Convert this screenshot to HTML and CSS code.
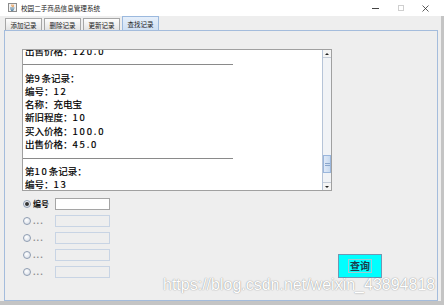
FILE: index.html
```html
<!DOCTYPE html>
<html lang="zh">
<head>
    <meta charset="UTF-8">
    <title>校园二手商品信息管理系统</title>
    <link rel="stylesheet" href="styles.css">
</head>
<body>
    <div class="titlebar">
        <svg class="app-icon" width="9" height="9" viewBox="0 0 9 9">
            <rect x="0.5" y="0.5" width="8" height="8" fill="#f2f2f2" stroke="#8c8c8c"/>
            <path d="M4 1.5 C3 2.5 5 3 4 4.2 M5.4 1.8 C4.8 2.6 6 3 5.3 3.8" fill="none" stroke="#e76f00" stroke-width="0.8"/>
            <path d="M2 5 H6.5 M2.4 6.3 H6 M3 7.5 H5.4" stroke="#5382a1" stroke-width="0.9"/>
        </svg>
        <span class="title">校园二手商品信息管理系统</span>
        <div class="controls">
            <span class="ctl ctl-min"></span>
            <span class="ctl ctl-max"></span>
            <span class="ctl ctl-close">
                <svg width="7" height="7" viewBox="0 0 7 7"><path d="M0.5 0.5 L6.5 6.5 M6.5 0.5 L0.5 6.5" stroke="#333" stroke-width="0.8"/></svg>
            </span>
        </div>
    </div>

    <div class="frame">
        <div class="tabs">
            <div class="tab">添加记录</div>
            <div class="tab">删除记录</div>
            <div class="tab">更新记录</div>
            <div class="tab active">查找记录</div>
        </div>

        <div class="panel">
            <div class="record-box">
                <div class="record-text">
                    <div class="record-lines">
                        <div class="line">出售价格：<span class="num">120.0</span></div>
                        <div class="sep"></div>
                        <div class="line">第<span class="num">9</span>条记录：</div>
                        <div class="line">编号：<span class="num">12</span></div>
                        <div class="line">名称：充电宝</div>
                        <div class="line">新旧程度：<span class="num">10</span></div>
                        <div class="line">买入价格：<span class="num">100.0</span></div>
                        <div class="line">出售价格：<span class="num">45.0</span></div>
                        <div class="sep"></div>
                        <div class="line">第<span class="num">10</span>条记录：</div>
                        <div class="line">编号：<span class="num">13</span></div>
                        <div class="line">名称：台灯</div>
                    </div>
                </div>
                <div class="scrollbar">
                    <div class="sb-btn sb-up"></div>
                    <div class="sb-thumb"></div>
                    <div class="sb-space"></div>
                    <div class="sb-btn sb-down"></div>
                </div>
            </div>

            <div class="search">
                <div class="options">
                    <div class="option">
                        <span class="radio checked"></span>
                        <span class="label">编号</span>
                        <span class="field on"></span>
                    </div>
                    <div class="option">
                        <span class="radio"></span>
                        <span class="label muted">...</span>
                        <span class="field"></span>
                    </div>
                    <div class="option">
                        <span class="radio"></span>
                        <span class="label muted">...</span>
                        <span class="field"></span>
                    </div>
                    <div class="option">
                        <span class="radio"></span>
                        <span class="label muted">...</span>
                        <span class="field"></span>
                    </div>
                    <div class="option">
                        <span class="radio"></span>
                        <span class="label muted">...</span>
                        <span class="field"></span>
                    </div>
                </div>
                <button class="query"><span>查询</span></button>
            </div>
        </div>
    </div>

    <div class="watermark">https://blog.csdn.net/weixin_43894818</div>
</body>
</html>
```

FILE: styles.css
```css
body {
    margin: 0;
    width: 444px;
    height: 305px;
    overflow: hidden;
    position: relative;
    background-color: #c4c4c4;
    font-family: "Noto Sans CJK SC", sans-serif;
}

.titlebar {
    height: 16px;
    background-color: #fff;
    display: flex;
    align-items: center;
    padding-left: 8px;
}

.app-icon {
    margin-right: 4px;
    margin-top: -1px;
}

.title {
    flex: 1;
    font-size: 6.6px;
    color: #222;
}

.controls {
    display: flex;
    margin-right: 6px;
}

.ctl {
    width: 25px;
    height: 16px;
    display: flex;
    align-items: center;
    justify-content: center;
}

.ctl-min::before {
    content: "";
    width: 7px;
    border-top: 1px solid #444;
}

.ctl-max::before {
    content: "";
    width: 6px;
    height: 6px;
    border: 1px solid #cfcfcf;
    box-sizing: border-box;
}

.frame {
    width: 441px;
    height: 285px;
    background-color: #eeeeee;
}

.tabs {
    height: 14px;
    display: flex;
    align-items: flex-end;
    gap: 2px;
    padding-left: 5px;
}

.tab {
    width: 37px;
    height: 12px;
    box-sizing: border-box;
    border: 1px solid #a6a6a6;
    border-bottom: none;
    background: linear-gradient(#fdfdfd, #e3e3e3);
    font-size: 6.5px;
    color: #222;
    display: flex;
    align-items: center;
    justify-content: center;
}

.tab.active {
    height: 14px;
    border-color: #9bb9de;
    background: linear-gradient(#e6effa, #cfe0f4);
}

.panel {
    margin-left: 4px;
    width: 434px;
    height: 271px;
    box-sizing: border-box;
    border: 1px solid #a4bcdc;
    padding: 18px 0 0 17px;
}

.record-box {
    width: 310px;
    height: 142px;
    box-sizing: border-box;
    border: 1px solid #a0a0a0;
    background-color: #fff;
    display: flex;
}

.record-text {
    flex: 1;
    overflow: hidden;
    padding-left: 2px;
}

.record-lines {
    margin-top: -5px;
}

.line {
    height: 13.3px;
    line-height: 13.3px;
    font-size: 9.5px;
    color: #000;
    white-space: nowrap;
    -webkit-text-stroke: 0.2px #000;
}

.num {
    letter-spacing: 1.8px;
}

.sep {
    height: 13.3px;
    margin-left: -2px;
    display: flex;
    align-items: center;
}

.sep::before {
    content: "";
    width: 210px;
    border-top: 1px solid #8a8a8a;
}

.scrollbar {
    width: 9px;
    box-sizing: border-box;
    border-left: 1px solid #b6c4d8;
    background-color: #f1f3f6;
    display: flex;
    flex-direction: column;
}

.sb-btn {
    height: 8px;
    display: flex;
    align-items: center;
    justify-content: center;
    background-color: #f4f4f4;
}

.sb-up {
    border-bottom: 1px solid #c4ccd8;
    box-sizing: border-box;
}

.sb-down {
    border-top: 1px solid #c4ccd8;
    box-sizing: border-box;
}

.sb-up::before {
    content: "";
    border-left: 2px solid transparent;
    border-right: 2px solid transparent;
    border-bottom: 2px solid #222;
}

.sb-down::before {
    content: "";
    border-left: 2px solid transparent;
    border-right: 2px solid transparent;
    border-top: 2px solid #222;
}

.sb-thumb {
    margin-top: 97px;
    height: 18px;
    box-sizing: border-box;
    border: 1px solid #9ab6dc;
    background: linear-gradient(90deg, #dfe9f7, #c8daf0);
    display: flex;
    align-items: center;
    justify-content: center;
}

.sb-thumb::before {
    content: "";
    width: 5px;
    height: 1px;
    border-top: 1px solid #8aa6cc;
    border-bottom: 1px solid #8aa6cc;
}

.sb-space {
    flex: 1;
}

.search {
    display: flex;
    align-items: flex-start;
    margin-top: 4px;
}

.options {
    width: 90px;
    display: flex;
    flex-direction: column;
}

.option {
    height: 17px;
    display: flex;
    align-items: center;
}

.radio {
    width: 8px;
    height: 8px;
    box-sizing: border-box;
    border-radius: 50%;
    border: 1px solid #8f9db2;
    background: radial-gradient(circle at 40% 35%, #ffffff, #d2d9e4);
    margin-left: 1px;
    margin-right: 2px;
    display: flex;
    align-items: center;
    justify-content: center;
}

.radio.checked::after {
    content: "";
    width: 4px;
    height: 4px;
    border-radius: 50%;
    background-color: #333;
}

.label {
    width: 22px;
    font-size: 8px;
    font-weight: bold;
    color: #111;
}

.label.muted {
    color: #8a8a8a;
    letter-spacing: 1px;
}

.field {
    width: 55px;
    height: 12px;
    box-sizing: border-box;
    border: 1px solid #c8d4e4;
    background-color: #eeeeee;
}

.field.on {
    background-color: #fff;
    border-color: #a5a5a5;
}

.query {
    margin-left: 226px;
    margin-top: 59px;
    width: 44px;
    height: 24px;
    padding: 0;
    border: 1px solid #6f98b4;
    background-color: #00ffff;
    font-family: "Noto Sans CJK SC", sans-serif;
    font-size: 10px;
    font-weight: bold;
    color: #1c3c4c;
    display: flex;
    align-items: center;
    justify-content: center;
}

.query span {
    border: 1px solid #9ccad2;
    padding: 0 1px;
    line-height: 12px;
}

.watermark {
    position: absolute;
    left: 163px;
    top: 276px;
    font-family: "Liberation Sans", Arial, sans-serif;
    font-size: 16px;
    color: #ffffff;
    text-shadow: 0 0 1px rgba(0, 0, 0, 0.4), 0 0 2px rgba(0, 0, 0, 0.15);
    white-space: nowrap;
}
```
